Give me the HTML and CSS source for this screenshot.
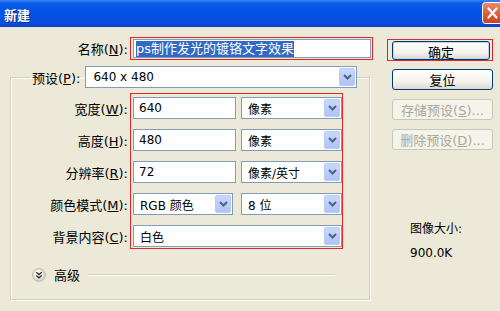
FILE: index.html
```html
<!DOCTYPE html>
<html lang="zh-CN">
<head>
    <meta charset="UTF-8">
    <title>新建</title>
    <link rel="stylesheet" href="styles.css">
</head>
<body>
<div class="window">

    <!-- 标题栏 -->
    <div class="titlebar">
        <span class="title">新建</span>
        <span class="close">
            <svg width="22" height="22" viewBox="0 0 22 22">
                <defs>
                    <linearGradient id="cg" x1="0" y1="0" x2="0" y2="1">
                        <stop offset="0" stop-color="#ec8a68"/>
                        <stop offset="1" stop-color="#c8401c"/>
                    </linearGradient>
                </defs>
                <rect x="0.5" y="0.5" width="21" height="21" rx="3" fill="url(#cg)" stroke="#fff"/>
                <path d="M6.5 6.5 L14.5 15.5 M14.5 6.5 L6.5 15.5" stroke="#fff" stroke-width="2.2" stroke-linecap="round"/>
            </svg>
        </span>
    </div>

    <div class="content">
        <div class="left">
            <div class="name-row">
                <label class="lbl name-lbl">名称(<u>N</u>):</label>
                <div class="mark name-mark">
                    <div class="input name-input"><span class="sel">ps制作发光的镀铬文字效果</span></div>
                </div>
            </div>

            <fieldset class="group">
                <legend class="preset">
                    <label class="lbl">预设(<u>P</u>):</label>
                    <div class="select preset-select">
                        <span>640 x 480</span>
                        <span class="arrow"><svg width="9" height="6" viewBox="0 0 9 6"><path d="M1 1 L4.5 4.5 L8 1" fill="none" stroke="#4d6185" stroke-width="2"/></svg></span>
                    </div>
                </legend>

                <div class="rows">
                    <div class="labels">
                        <label class="lbl">宽度(<u>W</u>):</label>
                        <label class="lbl">高度(<u>H</u>):</label>
                        <label class="lbl">分辨率(<u>R</u>):</label>
                        <label class="lbl">颜色模式(<u>M</u>):</label>
                        <label class="lbl">背景内容(<u>C</u>):</label>
                    </div>
                    <div class="mark fields">
                        <div class="input">640</div>
                        <div class="select"><span>像素</span><span class="arrow"><svg width="9" height="6" viewBox="0 0 9 6"><path d="M1 1 L4.5 4.5 L8 1" fill="none" stroke="#4d6185" stroke-width="2"/></svg></span></div>
                        <div class="input">480</div>
                        <div class="select"><span>像素</span><span class="arrow"><svg width="9" height="6" viewBox="0 0 9 6"><path d="M1 1 L4.5 4.5 L8 1" fill="none" stroke="#4d6185" stroke-width="2"/></svg></span></div>
                        <div class="input">72</div>
                        <div class="select"><span>像素/英寸</span><span class="arrow"><svg width="9" height="6" viewBox="0 0 9 6"><path d="M1 1 L4.5 4.5 L8 1" fill="none" stroke="#4d6185" stroke-width="2"/></svg></span></div>
                        <div class="select mode"><span>RGB 颜色</span><span class="arrow"><svg width="9" height="6" viewBox="0 0 9 6"><path d="M1 1 L4.5 4.5 L8 1" fill="none" stroke="#4d6185" stroke-width="2"/></svg></span></div>
                        <div class="select"><span>8 位</span><span class="arrow"><svg width="9" height="6" viewBox="0 0 9 6"><path d="M1 1 L4.5 4.5 L8 1" fill="none" stroke="#4d6185" stroke-width="2"/></svg></span></div>
                        <div class="select wide"><span>白色</span><span class="arrow"><svg width="9" height="6" viewBox="0 0 9 6"><path d="M1 1 L4.5 4.5 L8 1" fill="none" stroke="#4d6185" stroke-width="2"/></svg></span></div>
                    </div>
                </div>

                <div class="advanced">
                    <svg width="14" height="14" viewBox="0 0 14 14">
                        <defs>
                            <radialGradient id="ag" cx="0.4" cy="0.35" r="0.7">
                                <stop offset="0" stop-color="#ffffff"/>
                                <stop offset="1" stop-color="#d4d2c6"/>
                            </radialGradient>
                        </defs>
                        <circle cx="7" cy="7" r="6.3" fill="url(#ag)" stroke="#b5b3a6"/>
                        <path d="M4.3 4.2 L7 6.6 L9.7 4.2 M4.3 7.4 L7 9.8 L9.7 7.4" fill="none" stroke="#333" stroke-width="1.3"/>
                    </svg>
                    <span>高级</span>
                    <div class="line"></div>
                </div>
            </fieldset>
        </div>

        <div class="right">
            <div class="mark ok-mark"><button class="btn">确定</button></div>
            <button class="btn">复位</button>
            <button class="btn" disabled>存储预设(<u>S</u>)...</button>
            <button class="btn" disabled>删除预设(<u>D</u>)...</button>
            <div class="size">
                <div>图像大小:</div>
                <div>900.0K</div>
            </div>
        </div>
    </div>
</div>
</body>
</html>
```

FILE: styles.css
```css
/* 整体 */
body {
    margin: 0;
    font-family: "DejaVu Sans", "Noto Sans CJK SC", sans-serif;
    font-size: 12px;
    color: #000;
}

.window {
    width: 500px;
    height: 311px;
    background: #ece9d8;
    overflow: hidden;
}

/* 标题栏 */
.titlebar {
    height: 27px;
    background: linear-gradient(#3a86f2 0%, #0a5ce8 12%, #0550e6 50%, #0a4fdd 85%, #0844c8 100%);
    display: flex;
    justify-content: space-between;
    align-items: flex-start;
}

.title {
    color: #fff;
    font-weight: bold;
    font-size: 13px;
    padding: 5px 0 0 4px;
    text-shadow: 1px 1px 0 #0a2a80;
}

.close {
    margin: 2px -4px 0 0;
    height: 22px;
}

/* 内容 */
.content {
    display: flex;
    padding-top: 10px;
}

.left {
    width: 373px;
}

.lbl {
    white-space: nowrap;
    font-size: 13px;
}

.name-row {
    display: flex;
    align-items: center;
}

.name-lbl {
    width: 128px;
    text-align: right;
}

/* 红色标注框 */
.mark {
    border: 1px solid #e0262a;
    box-sizing: border-box;
}

.name-mark {
    margin-left: 2px;
    width: 243px;
    height: 23px;
    padding: 1px 1px 1px 2px;
}

.input {
    background: #fff;
    border: 1px solid #7f9db9;
    box-sizing: border-box;
    height: 22px;
    display: flex;
    align-items: center;
    padding-left: 5px;
}

.name-input {
    height: 100%;
    padding-left: 2px;
    font-size: 13px;
}

.sel {
    background: #316ac5;
    color: #fff;
    line-height: 16px;
}

/* 下拉框 */
.select {
    background: #fff;
    border: 1px solid #7f9db9;
    box-sizing: border-box;
    height: 22px;
    display: flex;
    align-items: center;
    justify-content: space-between;
    padding-left: 6px;
}

.arrow {
    width: 16px;
    height: 18px;
    margin-right: 1px;
    background: linear-gradient(#c8d8fc, #afc4f4);
    border: 1px solid #b6cbf7;
    box-sizing: border-box;
    border-radius: 2px;
    display: flex;
    align-items: center;
    justify-content: center;
}

/* 分组框 */
.group {
    margin: 6px 0 0 10px;
    width: 360px;
    height: 234px;
    box-sizing: border-box;
    border: 1px solid #d0d0bf;
    box-shadow: inset 1px 1px 0 #fff, 1px 1px 0 #fff;
    padding: 5px 10px 0 19px;
}

.preset {
    display: flex;
    align-items: center;
    padding: 0 0 0 2px;
}

.preset-select {
    margin-left: 5px;
    width: 272px;
    padding-left: 7px;
}

.rows {
    display: flex;
}

.labels {
    width: 98px;
    display: grid;
    grid-template-rows: repeat(5, 22px);
    row-gap: 10px;
    padding-top: 4px;
    justify-items: end;
    align-items: center;
}

.fields {
    margin-left: 2px;
    width: 213px;
    padding: 3px 0 1px 2px;
    display: grid;
    grid-template-columns: 103px 101px;
    grid-template-rows: repeat(5, 22px);
    column-gap: 5px;
    row-gap: 10px;
}

.mode {
    width: 100px;
}

.wide {
    grid-column: 1 / 3;
}

/* 高级 */
.advanced {
    display: flex;
    align-items: center;
    margin-top: 16px;
    padding-left: 2px;
}

.advanced span {
    margin-left: 8px;
    font-size: 13px;
}

.line {
    flex: 1;
    height: 1px;
    background: #d0d0bf;
    border-bottom: 1px solid #fff;
    margin: 0 24px 0 8px;
}

/* 右侧按钮 */
.right {
    margin-left: 14px;
    width: 108px;
    display: flex;
    flex-direction: column;
}

.ok-mark {
    width: 106px;
    height: 22px;
    padding: 0 0 0 4px;
    margin: 2px 0 8px 0;
    display: flex;
    align-items: center;
}

.btn {
    width: 101px;
    height: 21px;
    margin-left: 5px;
    margin-bottom: 9px;
    font: inherit;
    font-size: 13px;
    color: #000;
    border: 1px solid #003c74;
    border-radius: 3px;
    background: linear-gradient(#ffffff 0%, #f5f4ee 60%, #dcd9ce 100%);
    padding: 0;
}

.ok-mark .btn {
    margin: 0;
    width: 98px;
    height: 19px;
    box-shadow: inset 0 0 0 1px #b8d4f8;
}

.btn:disabled {
    color: #aca899;
    border-color: #c9c7ba;
    background: #f5f4ea;
}

.size {
    margin: 58px 0 0 23px;
    width: 40px;
    text-align: center;
    line-height: 24px;
    white-space: nowrap;
}
```
